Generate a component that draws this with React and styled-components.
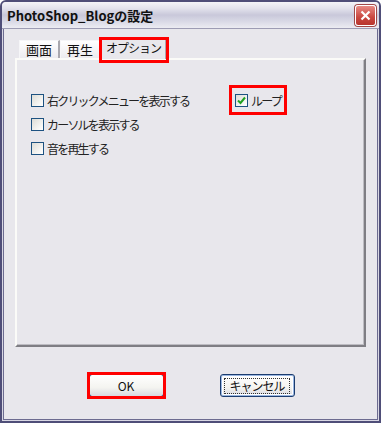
import React from "react";
import styled, { createGlobalStyle } from "styled-components";

const Global = createGlobalStyle`
    html, body {
        margin: 0;
        padding: 0;
        background: #ffffff;
    }
    body {
        font-family: "Noto Sans CJK JP", "Liberation Sans", sans-serif;
    }
`;

const Window = styled.div`
    width: 381px;
    height: 423px;
    box-sizing: border-box;
    background: #e8e7ec;
    border: 2px solid #4f4e78;
    box-shadow: inset 0 0 0 1px #d9d8e4, inset 0 0 0 2px #6c6b90;
    border-radius: 6px 6px 0 0;
    display: flex;
    flex-direction: column;
    overflow: hidden;
`;

const TitleBar = styled.div`
    height: 26px;
    flex: none;
    display: flex;
    align-items: center;
    justify-content: space-between;
    padding: 0 3px 0 5px;
    background: linear-gradient(
        to bottom,
        #f4f4f8 0%,
        #e2e2ec 25%,
        #c9c8da 50%,
        #d9d9e6 75%,
        #ececf2 100%
    );
    border-bottom: 1px solid #9d9cb4;
`;

const Title = styled.div`
    font-size: 13px;
    font-weight: bold;
    color: #111;
`;

const CloseButton = styled.div`
    width: 21px;
    height: 21px;
    box-sizing: border-box;
    border: 1px solid #fff;
    border-radius: 3px;
    background: linear-gradient(to bottom, #e78a84, #c9473f 60%, #b8352e);
    box-shadow: 0 0 0 1px #a04848;
    display: flex;
    align-items: center;
    justify-content: center;
`;

const Body = styled.div`
    flex: 1;
    display: flex;
    flex-direction: column;
    padding: 9px 13px 0 13px;
`;

const TabRow = styled.div`
    display: flex;
    align-items: flex-end;
    height: 20px;
    padding-left: 4px;
    position: relative;
    z-index: 1;
`;

const Tab = styled.div`
    position: relative;
    height: ${(p) => (p.active ? "21px" : "18px")};
    box-sizing: border-box;
    padding: 0 ${(p) => (p.active ? "4px" : "6px")};
    font-size: ${(p) => (p.active ? "12px" : "13px")};
    letter-spacing: ${(p) => (p.active ? "-1px" : "0")};
    line-height: 18px;
    color: #111;
    background: ${(p) => (p.active ? "#e8e7ec" : "linear-gradient(#ffffff, #ecebef)")};
    border: 1px solid #f6f6f8;
    border-right: 2px solid #a9a8ae;
    border-bottom: none;
    margin-bottom: ${(p) => (p.active ? "-1px" : "0")};

    &::after {
        content: "";
        display: ${(p) => (p.marked ? "block" : "none")};
        position: absolute;
        left: -3px;
        right: -4px;
        top: -2px;
        bottom: -4px;
        border: 3px solid #ff0000;
    }
`;

const Panel = styled.div`
    height: 289px;
    box-sizing: border-box;
    background: #e8e7ec;
    border-top: 2px solid #fbfbf8;
    border-left: 2px solid #fbfbf8;
    border-right: 2px solid #7f7e84;
    border-bottom: 2px solid #7f7e84;
    box-shadow: inset -1px -1px 0 #bdbcc2;
    padding: 31px 0 0 14px;
    display: grid;
    grid-template-columns: 204px auto;
    grid-auto-rows: 24px;
    align-content: start;
`;

const Option = styled.label`
    display: flex;
    align-items: center;
    gap: 3px;
    font-size: 12px;
    letter-spacing: -1.8px;
    color: #222;
    justify-self: start;
    height: 18px;
    outline: ${(p) => (p.marked ? "3px solid #ff0000" : "none")};
    outline-offset: 3px;
`;

const Box = styled.span`
    width: 13px;
    height: 13px;
    flex: none;
    box-sizing: border-box;
    border: 1px solid #1d5281;
    background: linear-gradient(135deg, #dcdcd6 0%, #f6f6f4 70%, #ffffff 100%);
    display: flex;
    align-items: center;
    justify-content: center;
`;

const ButtonRow = styled.div`
    display: flex;
    justify-content: center;
    gap: 56px;
    margin-top: 27px;
    padding-left: 2px;
`;

const Button = styled.div`
    position: relative;
    width: 75px;
    height: 23px;
    box-sizing: border-box;
    border: 1px solid #1b3c6e;
    border-radius: 3px;
    background: linear-gradient(to bottom, #ffffff 0%, #f4f4f0 60%, #d8d8e0 100%);
    font-size: 12px;
    color: #111;
    display: flex;
    align-items: center;
    justify-content: center;
    box-shadow: ${(p) =>
        p.focused ? "inset 0 0 0 1px #9ab7e2, inset 0 0 0 2px #fff" : "none"};

    &::after {
        content: "";
        display: ${(p) => (p.marked ? "block" : "none")};
        position: absolute;
        inset: -3px;
        border: 3px solid #ff0000;
    }
`;

const FocusText = styled.span`
    padding: 0 4px;
    letter-spacing: -1px;
    border: 1px dotted #333;
    line-height: 14px;
`;

function Check({ checked }) {
    return (
        <Box>
            {checked && (
                <svg width="9" height="9" viewBox="0 0 9 9">
                    <path
                        d="M1 4.5 L3.5 7 L8 1.5"
                        fill="none"
                        stroke="#21a121"
                        strokeWidth="2"
                    />
                </svg>
            )}
        </Box>
    );
}

function App() {
    return (
        <>
            <Global />
            <Window>
                <TitleBar>
                    <Title>PhotoShop_Blogの設定</Title>
                    <CloseButton>
                        <svg width="11" height="11" viewBox="0 0 11 11">
                            <path
                                d="M1.5 1.5 L9.5 9.5 M9.5 1.5 L1.5 9.5"
                                stroke="#fff"
                                strokeWidth="2.2"
                            />
                        </svg>
                    </CloseButton>
                </TitleBar>
                <Body>
                    <TabRow>
                        <Tab>画面</Tab>
                        <Tab>再生</Tab>
                        <Tab active marked>オプション</Tab>
                    </TabRow>
                    <Panel>
                        <Option>
                            <Check />
                            右クリックメニューを表示する
                        </Option>
                        <Option marked>
                            <Check checked />
                            ループ
                        </Option>
                        <Option>
                            <Check />
                            カーソルを表示する
                        </Option>
                        <span />
                        <Option>
                            <Check />
                            音を再生する
                        </Option>
                    </Panel>
                    <ButtonRow>
                        <Button marked>OK</Button>
                        <Button focused>
                            <FocusText>キャンセル</FocusText>
                        </Button>
                    </ButtonRow>
                </Body>
            </Window>
        </>
    );
}

export default App;
